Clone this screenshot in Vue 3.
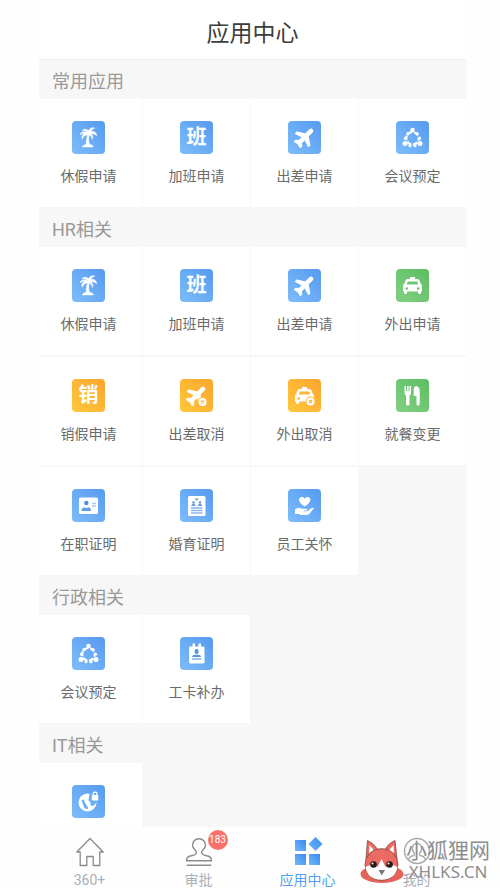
<script setup>
const sections = [
  {
    title: '常用应用',
    apps: [
      { name: '休假申请', icon: 'palm', tone: 'blue' },
      { name: '加班申请', glyph: '班', tone: 'blue' },
      { name: '出差申请', icon: 'plane', tone: 'blue' },
      { name: '会议预定', icon: 'meeting', tone: 'blue' },
    ],
  },
  {
    title: 'HR相关',
    apps: [
      { name: '休假申请', icon: 'palm', tone: 'blue' },
      { name: '加班申请', glyph: '班', tone: 'blue' },
      { name: '出差申请', icon: 'plane', tone: 'blue' },
      { name: '外出申请', icon: 'taxi', tone: 'green' },
      { name: '销假申请', glyph: '销', tone: 'orange' },
      { name: '出差取消', icon: 'plane-cancel', tone: 'orange' },
      { name: '外出取消', icon: 'taxi-cancel', tone: 'orange' },
      { name: '就餐变更', icon: 'meal', tone: 'green' },
      { name: '在职证明', icon: 'id-card', tone: 'blue' },
      { name: '婚育证明', icon: 'family', tone: 'blue' },
      { name: '员工关怀', icon: 'care', tone: 'blue' },
    ],
  },
  {
    title: '行政相关',
    apps: [
      { name: '会议预定', icon: 'meeting', tone: 'blue' },
      { name: '工卡补办', icon: 'badge-card', tone: 'blue' },
    ],
  },
  {
    title: 'IT相关',
    apps: [{ name: '', icon: 'globe', tone: 'blue' }],
  },
]

const tabs = [
  { name: '360+', icon: 'home' },
  { name: '审批', icon: 'stamp', badge: 183 },
  { name: '应用中心', icon: 'apps', active: true },
  { name: '我的', icon: 'me' },
]
</script>

<template>
  <div class="page">
    <svg class="sprite" aria-hidden="true">
      <defs>
        <linearGradient id="tab-blue" x1="0" y1="1" x2="1" y2="0">
          <stop offset="0" stop-color="#72b8f8" />
          <stop offset="1" stop-color="#378bf2" />
        </linearGradient>
      </defs>
      <symbol id="palm" viewBox="0 0 33 33">
        <path fill="#fff" stroke="#fff" stroke-width=".5" d="M16.2 12.2C14.800 10 12.600 9 10.300 9.700C11.500 7.800 15 7.700 16.500 10C17.300 7.200 20.300 5.900 22.700 7.200C20.600 7.500 19.300 8.800 18.700 10.600C21.500 9.400 24.600 11.400 24.600 15C23.200 13.200 21.200 12.300 19 12.800C20.800 14 21.300 16.600 20.300 18.400C19.800 16.100 18.800 14.600 17.400 14.100C16.300 17.500 16.500 20.800 17.800 23.600C19.700 23.700 21 24.500 21.400 26H10.400C10.800 24.500 12.300 23.600 14.300 23.500C13.900 20.200 14.400 17 15.800 14.100C13.200 14 11.300 15.400 10.300 18.100C9 16 10.500 13 13 12.300C11.100 11.900 9.600 12.400 8 13.800C8.400 11 12.500 9.300 16.200 12.200Z" />
      </symbol>
      <symbol id="plane" viewBox="0 0 33 33">
        <path fill="#fff" stroke="#fff" stroke-width="1.600" stroke-linejoin="round" transform="translate(17 16) rotate(45) translate(-11.5 -12)" d="M20.500 16v-1.500l-7.500-5V3.500c0-.83-.67-1.500-1.500-1.500S10 2.670 10 3.500v6l-7.500 5V16l7.500-2.500V19l-2.500 2V22.500l4-1 4 1V21L13 19v-5.500z" />
      </symbol>
      <symbol id="meeting" viewBox="0 0 33 33">
        <circle cx="16.500" cy="17.300" r="6.300" fill="none" stroke="#fff" stroke-width="2.200" stroke-dasharray="4.900 1.700" stroke-dashoffset="2.400" />
        <g fill="#fff">
          <circle cx="16.500" cy="9" r="2.200" /><circle cx="9" cy="22.500" r="2.500" /><circle cx="24" cy="22.500" r="2.500" />
          <circle cx="12" cy="12.700" r="1.700" /><circle cx="21" cy="12.700" r="1.700" />
          <circle cx="9.500" cy="17.200" r="1.600" /><circle cx="23.500" cy="17.200" r="1.600" />
          <circle cx="14" cy="24.700" r="1.600" /><circle cx="19" cy="24.700" r="1.600" />
        </g>
      </symbol>
      <symbol id="taxi" viewBox="0 0 33 33">
        <path fill="#fff" d="M14 8h5v2h2.500q1.500 0 2 1.500l1.500 4h1v1.800h-.6q.6.700.6 1.700v3.500h-1v1q0 1.500-1.500 1.500T22 23.500v-1H11v1q0 1.500-1.500 1.500T8 23.500v-1H7V19q0-1 .6-1.700H7v-1.800h1l1.500-4Q10 10 11.500 10H14z" />
        <path fill="currentColor" d="M11.800 12.500h9.400l1 3H10.800z" />
        <circle cx="10.800" cy="19.500" r="1.300" fill="currentColor" /><circle cx="22.200" cy="19.500" r="1.300" fill="currentColor" />
      </symbol>
      <symbol id="plane-cancel" viewBox="0 0 33 33">
        <use href="#plane" />
        <circle cx="22.500" cy="23" r="5" fill="currentColor" />
        <circle cx="22.500" cy="23" r="4" fill="#fff" />
        <path d="M21 21.500l3 3m0-3l-3 3" stroke="currentColor" stroke-width="1.300" />
      </symbol>
      <symbol id="taxi-cancel" viewBox="0 0 33 33">
        <use href="#taxi" />
        <circle cx="22.500" cy="22.500" r="5" fill="currentColor" />
        <circle cx="22.500" cy="22.500" r="4" fill="#fff" />
        <path d="M21 21l3 3m0-3l-3 3" stroke="currentColor" stroke-width="1.300" />
      </symbol>
      <symbol id="meal" viewBox="0 0 33 33">
        <path fill="#fff" d="M8.500 7h1.400v5h1V7h1.700v5h1V7H15v7q0 2-1.500 2.500V25q0 1.600-1.700 1.600T10 25v-8.500Q8.500 16 8.500 14zM17.700 10.500Q18 7 20.500 7q3.200 1 3.200 5v13q0 1.600-1.600 1.600T20.500 25v-8h-2.800z" />
      </symbol>
      <symbol id="id-card" viewBox="0 0 33 33">
        <rect x="7" y="8.500" width="19" height="16.500" rx="1.500" fill="#fff" />
        <circle cx="14.300" cy="14" r="2.200" fill="#4f8fd5" />
        <path fill="#5f9ee0" d="M9.500 22q0-3.500 3-3.700l1.800 1 1.800-1q3 .2 3 3.700z" />
        <path d="M20 14.500h4M20 17h4" stroke="#a9cdf2" stroke-width="1.300" />
      </symbol>
      <symbol id="family" viewBox="0 0 33 33">
        <rect x="8" y="7" width="17.500" height="20" rx="1.500" fill="#fff" />
        <path fill="#85aeda" d="M16.700 12l-1.800-1.800q0-1.500 1.800-.6 1.800-.9 1.800.6z" />
        <g fill="#689fd9"><circle cx="13.500" cy="13.500" r="1.300" /><circle cx="20" cy="13.500" r="1.300" /><path d="M11.300 17q.3-2.200 2.200-2.200T15.700 17zM17.800 17q.3-2.200 2.200-2.200t2.200 2.200z" /></g>
        <path d="M11 19h11.500M11 21.500h11.500M11 24h11.500" stroke="#8ab6e5" stroke-width="1.500" />
      </symbol>
      <symbol id="care" viewBox="0 0 33 33">
        <path fill="#fff" d="M16.700 17.500Q11 14 11 10.800C11 7.600 15.200 7 16.700 9.600C18.200 7 22.400 7.600 22.400 10.800Q22.400 14 16.700 17.500zM7 20.500q4-3 6.500-.7h4.700q1.500.3.500 1.700h-3v.8h3.600l4-3q2-1.200 2.800-.2l-4.500 5.400Q20.500 26 18.500 26H13l-2-1H7z" />
      </symbol>
      <symbol id="badge-card" viewBox="0 0 33 33">
        <path fill="#fff" d="M10 9.500h2.500V6.500h2.500v3h3.500v-3H21v3h2.500q1 0 1 1V25q0 1.500-1.500 1.500H10.500Q9 26.500 9 25V10.500q0-1 1-1z" />
        <rect x="14.600" y="12" width="4" height="5" rx="2" fill="#5595dc" />
        <path fill="#5595dc" d="M12 20q.5-2.300 3-2.300h3.200q2.500 0 3 2.300z" />
        <path d="M12 22h9.500" stroke="#7eb5ee" stroke-width="1.500" />
      </symbol>
      <symbol id="globe" viewBox="0 0 33 33">
        <circle cx="15.500" cy="17.500" r="9" fill="#fff" />
        <path fill="currentColor" d="M9.500 15.500l2.200-1.200 1.300 3.700 3 4.500-.5 2-3-1.500zM17 11.500l1.500-4H26l.5 9-2.500 1-1 2-2 1.500-2.500-1v-3l-2-1.500z" />
        <rect x="19.800" y="10" width="6.500" height="5.500" rx=".7" fill="#fff" />
        <path d="M21.200 10.500V9q0-1.800 1.900-1.800T25 9v1.500" fill="none" stroke="#fff" stroke-width="1.200" />
      </symbol>
      <symbol id="home" viewBox="0 0 32 32">
        <path d="M2.800 16L16 2.500 29.200 16h-3.400v13.500h-6.600v-9h-6.400v9H6.200V16z" fill="none" stroke="#8b8b8b" stroke-width="1.300" stroke-linejoin="round" />
      </symbol>
      <symbol id="stamp" viewBox="0 0 32 32">
        <path d="M13.500 16.500c.3-2-4-3.200-4-7.300a6.500 6.500 0 0 1 13 0c0 4.100-4.300 5.300-4 7.300.2 2.500 3 3 6 3.500q4 .6 4 4.800h-25q0-4.200 4-4.800c3-.5 5.800-1 6-3.500zM3.800 29.300h24.400" fill="none" stroke="#8b8b8b" stroke-width="1.400" stroke-linejoin="round" />
      </symbol>
      <symbol id="apps" viewBox="0 0 32 32">
        <g fill="url(#tab-blue)">
          <rect x="3" y="4" width="11" height="11" /><rect x="3" y="18" width="11" height="11" /><rect x="17" y="18" width="11" height="11" />
          <path d="M23.500 1l7 7-7 7-7-7z" />
        </g>
      </symbol>
      <symbol id="me" viewBox="0 0 32 32">
        <circle cx="16" cy="15" r="12.500" fill="none" stroke="#aaa" stroke-width="1.500" />
        <path d="M7.500 24q1-4 5.500-4.500 1-.5.500-2-2.500-2.500-2-6 .8-4 4.500-4t4.500 4q.5 3.500-2 6-.5 1.500.5 2 4.500.5 5.500 4.500" fill="none" stroke="#aaa" stroke-width="1.300" />
      </symbol>
    </svg>

    <div class="screen">
      <header class="header"><h1>应用中心</h1></header>
      <main class="content">
        <section v-for="section in sections" :key="section.title">
          <h2>{{ section.title }}</h2>
          <div class="grid">
            <button
              v-for="app in section.apps"
              :key="app.name"
              class="tile"
              type="button"
              :aria-label="app.name || section.title"
            >
              <span class="icon" :class="app.tone">
                <svg v-if="app.icon" aria-hidden="true"><use :href="'#' + app.icon" /></svg>
                <template v-else>{{ app.glyph }}</template>
              </span>
              <span v-if="app.name" class="label">{{ app.name }}</span>
            </button>
          </div>
        </section>
      </main>
      <nav class="tabs">
        <a v-for="tab in tabs" :key="tab.name" href="#" class="tab" :class="{ active: tab.active }">
          <span class="tab-icon">
            <svg aria-hidden="true"><use :href="'#' + tab.icon" /></svg>
            <span v-if="tab.badge" class="badge">{{ tab.badge }}</span>
          </span>
          <span>{{ tab.name }}</span>
        </a>
      </nav>
    </div>

    <div class="watermark">
      <svg class="fox" viewBox="0 0 44 46" aria-hidden="true">
        <ellipse cx="22" cy="36" rx="21.500" ry="9" fill="#e4645b" />
        <path d="M6 21L7.500 2.500Q15 6 19 14zM37 21L35 2.500Q27 6 24 14z" fill="#eb6b62" stroke="#7c4440" stroke-width=".8" />
        <path d="M9 15l.5-8 5 6zM34 15l-.5-8-5 6z" fill="#fff" />
        <ellipse cx="21.500" cy="26.500" rx="16.500" ry="15.800" fill="#eb6b62" stroke="#7c4440" stroke-width=".8" />
        <path d="M5.500 29q7-4 12 0l4-8 4 8q6-4 12 0-2 12.500-16 12.800Q7.500 41.500 5.500 29z" fill="#fff" />
        <circle cx="13.500" cy="26.500" r="3.300" fill="#2a1918" /><circle cx="29.500" cy="26.500" r="3.300" fill="#2a1918" />
        <circle cx="12.500" cy="25.500" r="1" fill="#fff" /><circle cx="28.500" cy="25.500" r="1" fill="#fff" />
        <path d="M18.500 32h6.500l-3.200 5.500z" fill="#77777d" />
      </svg>
      <div class="mark-text"><span>小狐狸网</span><span class="domain">XHLKS.CN</span></div>
    </div>
  </div>
</template>

<style>
body {
  margin: 0;
  background: #fefefe;
}
</style>

<style scoped>
.page {
  position: relative;
  box-sizing: border-box;
  height: 100vh;
  padding: 0 34px 0 39px;
  overflow: hidden;
  font-family: Roboto, "Noto Sans CJK SC", sans-serif;
}
.sprite {
  position: absolute;
  width: 0;
  height: 0;
}
.screen {
  display: flex;
  flex-direction: column;
  height: 100%;
}
.header {
  flex: none;
  display: flex;
  align-items: center;
  justify-content: center;
  height: 60px;
  padding-top: 8px;
  box-sizing: border-box;
  background: #fff;
  border-bottom: 1px solid #eee;
}
h1 {
  margin: 0;
  font-size: 23px;
  font-weight: 400;
  line-height: 32px;
  color: #3c3c3c;
}
.content {
  flex: 1;
  min-height: 0;
  overflow: hidden;
  background: #f7f7f7;
}
section {
  padding-bottom: 1px;
}
h2 {
  margin: 0;
  padding: 5px 13px 0;
  font-size: 18px;
  font-weight: 400;
  line-height: 34px;
  color: #999;
}
.grid {
  display: grid;
  grid-template-columns: repeat(4, 1fr);
  gap: 2px 1px;
  margin-left: -4px;
}
.tile {
  display: flex;
  flex-direction: column;
  align-items: center;
  gap: 12px;
  height: 108px;
  padding: 22px 0 0;
  border: 0;
  background: #fff;
  font-family: inherit;
  color: #6a6a6a;
}
.icon {
  display: flex;
  align-items: center;
  justify-content: center;
  width: 33px;
  height: 33px;
  border-radius: 4px;
  color: #fff;
  font-size: 20px;
  font-weight: 700;
  line-height: 33px;
}
.icon svg {
  width: 33px;
  height: 33px;
  color: #68acf5;
}
.blue {
  background: linear-gradient(45deg, #7dbdfa, #569af0);
}
.green {
  background: linear-gradient(45deg, #83d083, #5dbd61);
}
.green svg {
  color: #6cc66f;
}
.orange {
  background: linear-gradient(45deg, #ffc83c, #fba52f);
}
.orange svg {
  color: #fdb536;
}
.label {
  font-size: 14px;
  line-height: 20px;
}
.tabs {
  flex: none;
  display: grid;
  grid-template-columns: repeat(4, 1fr);
  height: 61px;
  margin: 0 -5px 0 -4px;
}
.tab {
  display: flex;
  flex-direction: column;
  align-items: center;
  padding-top: 9px;
  font-size: 14px;
  line-height: 20px;
  color: #a9afb8;
  text-decoration: none;
}
.tab.active {
  color: #559fe8;
}
.tab-icon {
  position: relative;
  height: 34px;
}
.tab-icon svg {
  width: 32px;
  height: 32px;
}
.badge {
  position: absolute;
  top: -6px;
  left: 25px;
  width: 20px;
  border-radius: 10px;
  background: #f8716d;
  color: #fff;
  font-size: 10px;
  line-height: 20px;
  text-align: center;
}
.watermark {
  position: absolute;
  right: 10px;
  bottom: 4px;
  display: flex;
  align-items: center;
  gap: 2px;
  color: #8d8d8d;
}
.fox {
  width: 44px;
  height: 46px;
}
.mark-text {
  display: flex;
  flex-direction: column;
  align-items: center;
  font-size: 21px;
  line-height: 22px;
}
.domain {
  font-family: "Noto Sans", sans-serif;
  font-size: 17px;
  line-height: 20px;
}
</style>
